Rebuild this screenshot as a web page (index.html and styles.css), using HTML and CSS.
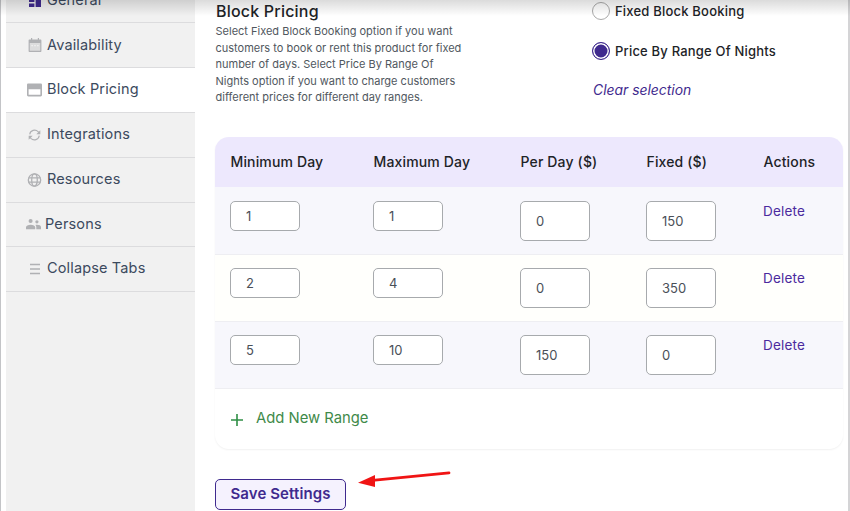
FILE: index.html
```html
<!DOCTYPE html>
<html lang="en">
<head>
<meta charset="utf-8">
<title>Block Pricing</title>
<link rel="stylesheet" href="styles.css">
</head>
<body>
<div class="page">
  <nav class="sidebar">
    <a class="tab">
      <svg class="ico ico-primary" viewBox="0 0 14 14"><path d="M1 1h5.400v7H1zM7.600 1H13v3.600H7.600zM7.600 6H13v7H7.600zM1 9.400h5.400V13H1z"/></svg>
      <span>General</span>
    </a>
    <a class="tab">
      <svg class="ico" viewBox="0 0 14 14"><path class="ico-soft" d="M1.500 4.500h11v8.800h-11z"/><path d="M3 0h1.200v1.600h5.600V0H11v1.600h1.400c.6 0 1 .4 1 1V13c0 .6-.4 1-1 1H1.600c-.6 0-1-.4-1-1V2.600c0-.6.4-1 1-1H3zM1.800 5v7.800h10.400V5z"/><path class="ico-dots" d="M3.500 7h1.200v1.200H3.500zM6.400 7h1.200v1.200H6.400zM9.300 7h1.200v1.200H9.300z"/></svg>
      <span>Availability</span>
    </a>
    <a class="tab tab-active">
      <svg class="ico ico-wide" viewBox="0 0 14 12"><path d="M1.300 0h11.400C13.500 0 14 .5 14 1.300v9.400c0 .8-.5 1.300-1.300 1.300H1.300C.5 12 0 11.500 0 10.700V1.300C0 .5.500 0 1.300 0zM1.500 5.300v5.200h11V5.300z"/></svg>
      <span>Block Pricing</span>
    </a>
    <a class="tab">
      <svg class="ico ico-wide" viewBox="0 0 14 14"><path class="ico-line" d="M2.200 6.300A4.900 4.900 0 0 1 10.600 3.700L11.400 4.700"/><path d="M12.800 2.200v4h-4z"/><path class="ico-line" d="M11.800 7.700A4.900 4.900 0 0 1 3.400 10.300L2.600 9.300"/><path d="M1.200 11.800v-4h4z"/></svg>
      <span>Integrations</span>
    </a>
    <a class="tab">
      <svg class="ico ico-wide" viewBox="0 0 14 14"><circle class="ico-line ico-heavy" cx="7" cy="7" r="6.200"/><ellipse class="ico-line ico-heavy" cx="7" cy="7" rx="2.800" ry="6.200"/><path class="ico-line ico-heavy" d="M1 4.800h12M1 9.200h12"/></svg>
      <span>Resources</span>
    </a>
    <a class="tab tab-tight">
      <svg class="ico ico-wide" viewBox="0 0 14 10"><circle cx="4.300" cy="2.200" r="1.900"/><circle cx="10.200" cy="3" r="1.500"/><path d="M0 10V8c0-1.400 2-2.300 4.300-2.300S8.600 6.600 8.600 8v2zM9.600 10V7.800c0-.8-.3-1.300-.9-1.800.5-.2 1-.3 1.600-.3 1.900 0 3.700.8 3.700 2.100V10z"/></svg>
      <span>Persons</span>
    </a>
    <a class="tab">
      <svg class="ico" viewBox="0 0 14 14"><path d="M2 1.700h10v1.600H2zM2 6.200h10v1.600H2zM2 10.700h10v1.600H2z"/></svg>
      <span>Collapse Tabs</span>
    </a>
  </nav>

  <main class="content">
    <section class="intro">
      <div class="intro-text">
        <h2 class="title">Block Pricing</h2>
        <p class="desc">Select Fixed Block Booking option if you want customers to book or rent this product for fixed number of days. Select Price By Range Of Nights option if you want to charge customers different prices for different day ranges.</p>
      </div>
      <div class="options">
        <label class="option"><span class="radio"></span>Fixed Block Booking</label>
        <label class="option"><span class="radio radio-on"></span>Price By Range Of Nights</label>
        <a class="clear">Clear selection</a>
      </div>
    </section>

    <section class="card">
      <div class="row row-head">
        <div>Minimum Day</div>
        <div>Maximum Day</div>
        <div>Per Day ($)</div>
        <div>Fixed ($)</div>
        <div>Actions</div>
      </div>
      <div class="row row-odd">
        <div><input class="field" type="text" value="1"></div>
        <div><input class="field" type="text" value="1"></div>
        <div><input class="field field-tall" type="text" value="0"></div>
        <div><input class="field field-tall" type="text" value="150"></div>
        <div><a class="delete">Delete</a></div>
      </div>
      <div class="row row-even">
        <div><input class="field" type="text" value="2"></div>
        <div><input class="field" type="text" value="4"></div>
        <div><input class="field field-tall" type="text" value="0"></div>
        <div><input class="field field-tall" type="text" value="350"></div>
        <div><a class="delete">Delete</a></div>
      </div>
      <div class="row row-odd">
        <div><input class="field" type="text" value="5"></div>
        <div><input class="field" type="text" value="10"></div>
        <div><input class="field field-tall" type="text" value="150"></div>
        <div><input class="field field-tall" type="text" value="0"></div>
        <div><a class="delete">Delete</a></div>
      </div>
      <div class="add-row">
        <svg class="plus" viewBox="0 0 12 12"><path d="M5.200 0h1.600v5.200H12v1.600H6.800V12H5.200V6.800H0V5.200h5.200z"/></svg>
        <span>Add New Range</span>
      </div>
    </section>

    <button class="save" type="button">Save Settings</button>
  </main>
</div>
<div class="top-shade"></div>
<svg class="arrow" viewBox="0 0 100 20"><path d="M17 11.200 L91 3.800" stroke="#f01414" stroke-width="2.800" stroke-linecap="round" fill="none"/><path d="M0 13.700 L17 6 L17 18z" fill="#f01414"/></svg>
</body>
</html>
```

FILE: styles.css
```css
* { box-sizing: border-box; }

html, body {
  margin: 0;
  height: 511px;
  overflow: hidden;
  background: #fff;
}

body {
  font-family: Inter, "Liberation Sans", sans-serif;
  color: #2c3338;
}

.page {
  display: flex;
  height: 511px;
  overflow: hidden;
  border-left: 1px solid #c3c4c7;
  padding-left: 5px;
  border-right: 2px solid #d4d4d6;
}

.sidebar {
  width: 189px;
  flex: none;
  background: #f1f1f1;
  display: flex;
  flex-direction: column;
  overflow: hidden;
}

.tab {
  flex: none;
  height: 44.8px;
  display: flex;
  align-items: center;
  gap: 5px;
  padding-left: 21px;
  border-bottom: 1px solid #dcdcde;
  font-size: 14.500px;
  letter-spacing: .15px;
  color: #3c4a5e;
}

.tab span { padding-bottom: 2.600px; }
.tab:first-child { margin-top: -21.400px; }
.tab-active { background: #fff; }
.tab-tight { padding-left: 20px; gap: 4px; }

.ico {
  width: 14px;
  height: 14px;
  flex: none;
  fill: #b0b1b4;
  margin-left: 1px;
}

.ico-wide { margin-left: 0; width: 15px; }
.ico-primary { fill: #3f2a8e; }
.ico-soft { fill: #dcdcdd; }
.ico-dots { fill: #f6f6f6; }
.ico-line { fill: none; stroke: #b0b1b4; stroke-width: 1.100; }
.ico-heavy { stroke-width: 1.300; }

.content {
  flex: 1;
  min-width: 0;
  padding: 0 5px 0 20px;
}

.intro {
  display: flex;
  margin-bottom: 31.500px;
}

.intro-text {
  width: 377px;
  flex: none;
  padding-left: 1px;
}

.title {
  margin: 0;
  font-size: 16px;
  line-height: 23px;
  font-weight: 500;
  color: #1d2327;
  letter-spacing: .2px;
}

.desc {
  margin: 0 0 0 -.5px;
  width: 250px;
  font-size: 11px;
  line-height: 16.500px;
  color: #50575e;
}

.options {
  display: flex;
  flex-direction: column;
  align-items: flex-start;
}

.option {
  display: flex;
  align-items: center;
  gap: 5px;
  height: 22px;
  margin-bottom: 18px;
  font-size: 13px;
  font-weight: 500;
  color: #1d2327;
  letter-spacing: .2px;
}

.radio {
  width: 18px;
  height: 18px;
  border: 1px solid #aaa;
  border-radius: 50%;
  background: #fff;
}

.radio-on {
  border-color: #3f2a8e;
  background: #3f2a8e;
  box-shadow: inset 0 0 0 1.500px #fff;
}

.clear {
  padding-left: 1px;
  font-size: 13.900px;
  line-height: 20px;
  font-style: italic;
  color: #3f2a8e;
}

.card {
  border-radius: 14px;
  background: #fff;
  box-shadow: 0 1px 2px rgba(0, 0, 0, .06);
}

.row {
  display: grid;
  grid-template-columns: 143px 147px 126px 117px 95px;
}

.row > div { padding-left: 15px; }

.row-head {
  height: 50px;
  align-items: center;
  padding-bottom: 1px;
  background: #ede8fd;
  border-radius: 14px 14px 0 0;
  font-size: 14px;
  font-weight: 500;
  color: #1d2327;
  letter-spacing: .15px;
}

.row-head > div { padding-left: 15.500px; }

.row-odd, .row-even {
  height: 67px;
  padding-top: 13px;
  border-bottom: 1px solid #eeeef2;
}

.row-head + .row {
  height: 68px;
  padding-top: 14px;
}

.row-odd { background: #f7f7fc; }
.row-even { background: #fffffc; }

.field {
  display: block;
  width: 70px;
  height: 30px;
  padding: 0 0 0 15px;
  border: 1px solid #a7aaad;
  border-radius: 5px;
  background: #fff;
  font: 13px Inter, "Liberation Sans", sans-serif;
  color: #4a5058;
}

.field-tall { height: 40px; }

.delete {
  display: block;
  font-size: 13.500px;
  line-height: 20px;
  color: #4b2a9e;
  letter-spacing: .2px;
}

.add-row {
  display: flex;
  align-items: center;
  gap: 13px;
  height: 60px;
  padding: 0 0 2px 16px;
  font-size: 14.800px;
  color: #3f8a4a;
}

.plus { width: 12px; height: 12px; margin-top: 4px; fill: #2f8f45; }

.save {
  display: block;
  width: 131px;
  height: 31px;
  margin-top: 30px;
  padding: 0 0 2px;
  border: 1px solid #3f2a8e;
  border-radius: 5px;
  background: #f5f2fe;
  font: 600 15px Inter, "Liberation Sans", sans-serif;
  color: #3f2a8e;
  letter-spacing: .1px;
}

.top-shade {
  position: absolute;
  left: 0;
  top: 0;
  width: 100%;
  height: 16px;
  background: linear-gradient(rgba(0, 0, 0, .14), rgba(0, 0, 0, 0));
  pointer-events: none;
}

.arrow {
  position: absolute;
  left: 358px;
  top: 469px;
  width: 100px;
  height: 20px;
}
```
